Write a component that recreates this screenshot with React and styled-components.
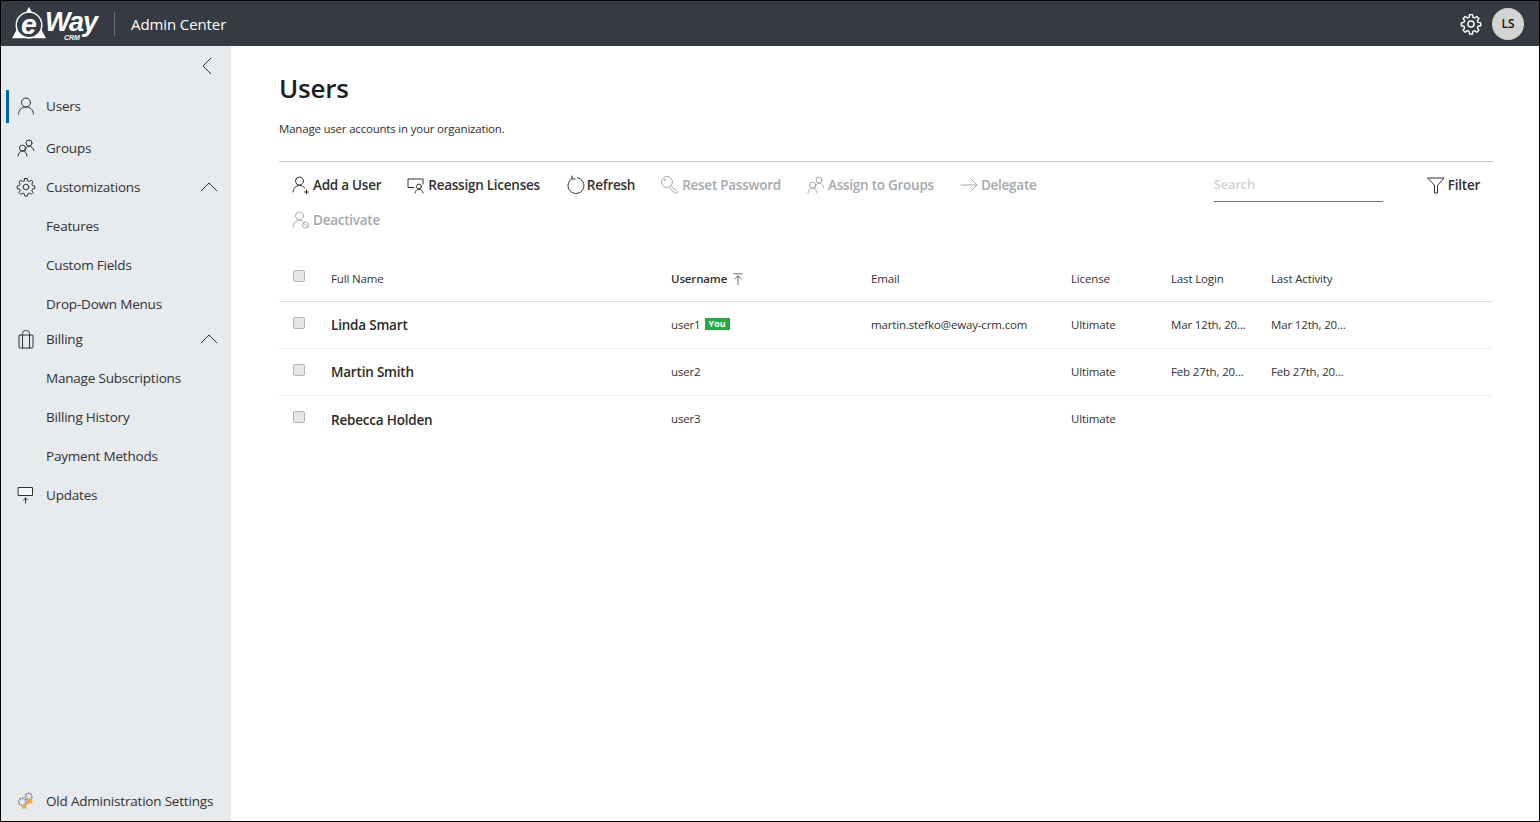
import React from 'react';
import styled, { createGlobalStyle } from 'styled-components';

const GlobalStyle = createGlobalStyle`
  html, body {
    margin: 0;
    padding: 0;
    height: 100%;
    background: #fff;
  }
  #root {
    height: 100%;
  }
  * {
    box-sizing: border-box;
  }
`;

const Page = styled.div`
  width: 1540px;
  height: 822px;
  border: 1px solid #000;
  display: flex;
  flex-direction: column;
  overflow: hidden;
  font-family: "Open Sans", "Noto Sans", sans-serif;
  color: #201f1e;
`;

const TopBar = styled.header`
  height: 45px;
  flex: none;
  display: flex;
  align-items: center;
  padding: 0 15px 0 10px;
  background: #363a42;
  color: #fff;
`;

const Logo = styled.div`
  width: 86px;
  height: 40px;
  display: flex;
  align-items: center;
  position: relative;
`;

const LogoWay = styled.span`
  margin-left: -3px;
  margin-top: -2px;
  font-family: "Liberation Sans", sans-serif;
  font-size: 27px;
  font-style: italic;
  font-weight: 700;
  letter-spacing: -1px;
`;

const LogoCrm = styled.span`
  position: absolute;
  left: 53px;
  top: 30px;
  font-family: "Liberation Sans", sans-serif;
  font-size: 7px;
  font-style: italic;
  font-weight: 700;
`;

const TopDivider = styled.div`
  width: 1px;
  height: 24px;
  margin: 0 16px 0 17px;
  background: #6f737a;
`;

const AppName = styled.div`
  flex: 1;
  font-size: 15px;
  letter-spacing: -0.1px;
`;

const Avatar = styled.div`
  width: 32px;
  height: 32px;
  margin-left: 10px;
  display: flex;
  align-items: center;
  justify-content: center;
  border-radius: 50%;
  background: #d3d3d3;
  color: #111;
  font-size: 12px;
  font-weight: 600;
`;

const Body = styled.div`
  flex: 1;
  min-height: 0;
  display: flex;
`;

const Sidebar = styled.nav`
  width: 230px;
  flex: none;
  display: flex;
  flex-direction: column;
  background: #e7ebee;
  color: #323130;
`;

const CollapseRow = styled.div`
  height: 38px;
  flex: none;
  display: flex;
  align-items: center;
  justify-content: flex-end;
  padding: 2px 14px 0 0;
`;

const NavItem = styled.div`
  position: relative;
  height: ${props => props.$height || 39}px;
  flex: none;
  display: flex;
  align-items: center;
  padding-bottom: ${props => props.$tight ? 4 : 0}px;
  padding-left: ${props => props.$sub ? 45 : 15}px;
  padding-right: 13px;
  font-size: 13.5px;
  letter-spacing: -0.2px;
`;

const ActiveBar = styled.span`
  position: absolute;
  left: 5px;
  top: 6px;
  width: 3px;
  height: 33px;
  background: #0063b1;
`;

const NavIcon = styled.span`
  width: 20px;
  height: 20px;
  margin-right: 10px;
  display: flex;
  align-items: center;
  justify-content: center;
  flex: none;
`;

const NavLabel = styled.span`
  flex: 1;
  white-space: nowrap;
`;

const SidebarFoot = styled.div`
  margin-top: auto;
  padding-bottom: 1px;
`;

const Main = styled.main`
  flex: 1;
  min-width: 0;
  padding: 0 46px 0 48px;
`;

const Title = styled.h1`
  margin: 24px 0 0;
  height: 38px;
  font-size: 26px;
  line-height: 36px;
  font-weight: 600;
  letter-spacing: -0.2px;
  color: #201f1e;
`;

const Subtitle = styled.p`
  margin: 11px 0 0;
  height: 20px;
  font-size: 11.5px;
  line-height: 20px;
  letter-spacing: -0.2px;
  color: #323130;
`;

const Toolbar = styled.div`
  margin-top: 22px;
  padding: 5px 13px 0 12px;
  height: 95px;
  display: flex;
  justify-content: space-between;
  align-items: flex-start;
  border-top: 1px solid #c8c8c8;
`;

const Actions = styled.div`
  width: 790px;
  display: flex;
  flex-wrap: wrap;
  column-gap: 25px;
`;

const ActionButton = styled.div`
  height: 35px;
  display: flex;
  align-items: center;
  gap: 2px;
  font-size: 13.5px;
  font-weight: 600;
  letter-spacing: -0.25px;
  white-space: nowrap;
  color: ${props => props.$disabled ? '#a6a9ac' : '#323130'};
`;

const ToolbarRight = styled.div`
  display: flex;
  align-items: flex-start;
`;

const SearchBox = styled.div`
  width: 169px;
  height: 35px;
  margin-right: 43px;
  display: flex;
  align-items: center;
  border-bottom: 1px solid #6b7280;
  font-size: 13px;
  font-weight: 600;
  letter-spacing: -0.2px;
  color: #ced2d6;
`;

const Row = styled.div`
  height: ${props => props.$header ? 46 : 47}px;
  display: grid;
  grid-template-columns: 52px 340px 200px 200px 100px 100px 1fr;
  align-items: center;
  border-bottom: 1px solid ${props => props.$header ? '#dedede' : '#efefef'};
  font-size: 11.5px;
  letter-spacing: -0.15px;
  color: #323130;

  &:last-child {
    border-bottom: none;
  }
`;

const CheckCell = styled.div`
  padding-left: 14px;
  margin-top: -5px;
`;

const Check = styled.span`
  display: block;
  width: 12px;
  height: 12px;
  border: 1px solid #b4b4b4;
  border-radius: 2px;
  background: #e6e6e6;
`;

const HeadCell = styled.div`
  display: flex;
  align-items: center;
  gap: 4px;
  font-weight: ${props => props.$sorted ? 600 : 400};
  white-space: nowrap;
`;

const NameCell = styled.div`
  font-size: 13.5px;
  font-weight: 600;
  letter-spacing: -0.2px;
  color: #2b2a29;
`;

const Cell = styled.div`
  display: flex;
  align-items: center;
  gap: 4px;
  margin-top: -2px;
  white-space: nowrap;
`;

const YouBadge = styled.span`
  display: inline-block;
  padding: 0 4px;
  height: 12px;
  line-height: 12px;
  background: #28a745;
  color: #fff;
  font-size: 9px;
  font-weight: 700;
  letter-spacing: 0;
`;

const Line = ({ size = 20, children, color = 'currentColor', width = 1 }) => (
  <svg width={size} height={size} viewBox="0 0 20 20" fill="none" stroke={color} strokeWidth={width} strokeLinecap="round" strokeLinejoin="round">
    {children}
  </svg>
);

const GearPath = () => (
  <>
    <circle cx="10" cy="10" r="2.8" />
    <path d="M8.7 1.5h2.6l.5 2.4 1.5.6 2-1.3 1.8 1.8-1.3 2 .6 1.5 2.4.5v2.6l-2.4.5-.6 1.5 1.3 2-1.8 1.8-2-1.3-1.5.6-.5 2.4H8.7l-.5-2.4-1.5-.6-2 1.3-1.8-1.8 1.3-2-.6-1.5-2.4-.5V9l2.4-.5.6-1.5-1.3-2 1.8-1.8 2 1.3 1.5-.6z" />
  </>
);

const UserIcon = () => (
  <Line>
    <circle cx="10" cy="6.5" r="4.5" />
    <path d="M2.5 18c.4-4.4 3.3-7 7.5-7s7.100 2.600 7.500 7" />
  </Line>
);

const GroupsIcon = () => (
  <Line>
    <circle cx="13" cy="5" r="3" />
    <path d="M9 13c.3-2.700 2-4.800 4-4.800 2.400 0 4.300 1.700 4.800 4.300" />
    <circle cx="6.500" cy="10" r="3" />
    <path d="M2 18c.3-3 2.100-5 4.500-5s4.200 2 4.500 5" />
  </Line>
);

const BillingIcon = () => (
  <Line>
    <rect x="3" y="6" width="14" height="13" rx="1" />
    <path d="M6.500 6V4.500a3 3 0 0 1 3-3h1a3 3 0 0 1 3 3V6M6.500 6v13M13.500 6v13" />
  </Line>
);

const UpdatesIcon = () => (
  <Line>
    <rect x="2.500" y="2.500" width="14" height="8" fill="#f4f6f8" />
    <path d="M9.500 18v-5M7.500 15l2-2 2 2" />
  </Line>
);

const OldAdminIcon = () => (
  <svg width="22" height="22" viewBox="0 0 22 22" fill="none">
    <circle cx="14" cy="6" r="3.500" stroke="#8c8c8c" strokeWidth="2" strokeDasharray="2 1" />
    <circle cx="7" cy="12" r="4" stroke="#8c8c8c" strokeWidth="2" strokeDasharray="2 1" />
    <circle cx="15" cy="11" r="3" fill="#f7a244" />
    <path d="M13 13l-5.500 5.500M9 17l1.500 1.500" stroke="#f7a244" strokeWidth="2.200" strokeLinecap="round" />
  </svg>
);

const ActionIcons = {
  add: (
    <Line>
      <circle cx="8.500" cy="6" r="4" />
      <path d="M2 17c.4-4 3-6.500 6.500-6.500 2.200 0 4 .9 5.200 2.500M15.500 15v4M13.500 17h4" />
    </Line>
  ),
  reassign: (
    <Line>
      <path d="M8 12.500H2V4h15v5" />
      <circle cx="13" cy="11.500" r="2.500" />
      <path d="M9 18c.3-2.200 1.900-3.600 4-3.600s3.700 1.400 4 3.600" />
    </Line>
  ),
  refresh: (
    <Line>
      <path d="M7 3.500A8 8 0 1 0 12.500 2.600" />
      <path d="M7 1v3h3" />
    </Line>
  ),
  key: (
    <Line>
      <circle cx="7" cy="7" r="5.500" />
      <path d="M11 11l6.500 6-1.500 1.500-1.500-.5-1-1.500-1-.5-2.500-3" />
      <circle cx="5" cy="5" r=".6" />
    </Line>
  ),
  arrow: (
    <Line>
      <path d="M2 10h16M12 4l6 6-6 6" />
    </Line>
  ),
  deactivate: (
    <Line>
      <circle cx="8.500" cy="6" r="4" />
      <path d="M2 17c.4-4 3-6.500 6.500-6.500 1 0 2 .2 2.800.6" />
      <circle cx="14.500" cy="15" r="3" />
      <path d="M12.500 13l4 4" />
    </Line>
  ),
  filter: (
    <Line>
      <path d="M2 3h16l-6.500 7.500V18h-3v-7.500z" />
    </Line>
  ),
};

const actions = [
  { key: 'add', label: 'Add a User', icon: ActionIcons.add },
  { key: 'reassign', label: 'Reassign Licenses', icon: ActionIcons.reassign },
  { key: 'refresh', label: 'Refresh', icon: ActionIcons.refresh },
  { key: 'reset', label: 'Reset Password', icon: ActionIcons.key, disabled: true },
  { key: 'assign', label: 'Assign to Groups', icon: <GroupsIcon />, disabled: true },
  { key: 'delegate', label: 'Delegate', icon: ActionIcons.arrow, disabled: true },
  { key: 'deactivate', label: 'Deactivate', icon: ActionIcons.deactivate, disabled: true },
];

const users = [
  { name: 'Linda Smart', username: 'user1', you: true, email: 'martin.stefko@eway-crm.com', license: 'Ultimate', login: 'Mar 12th, 20...', activity: 'Mar 12th, 20...' },
  { name: 'Martin Smith', username: 'user2', email: '', license: 'Ultimate', login: 'Feb 27th, 20...', activity: 'Feb 27th, 20...' },
  { name: 'Rebecca Holden', username: 'user3', email: '', license: 'Ultimate', login: '', activity: '' },
];

const Chevron = ({ up }) => (
  <svg width="18" height="18" viewBox="0 0 18 18" fill="none" stroke="#323130" strokeWidth="1">
    {up ? <path d="M1 13l8-8 8 8" /> : <path d="M12 1L4 9l8 8" />}
  </svg>
);

export default function App() {
  return (
    <Page>
      <GlobalStyle />
      <TopBar>
        <Logo>
          <svg width="39" height="40" viewBox="0 0 39 40" fill="none">
            <path d="M19 2L37 35H1z" fill="#fff" />
            <circle cx="19" cy="21" r="13.500" fill="#363a42" stroke="#fff" strokeWidth="1.500" />
            <text x="19" y="31" textAnchor="middle" fontFamily="Liberation Sans" fontSize="30" fontStyle="italic" fontWeight="700" fill="#fff">e</text>
          </svg>
          <LogoWay>Way</LogoWay>
          <LogoCrm>CRM</LogoCrm>
        </Logo>
        <TopDivider />
        <AppName>Admin Center</AppName>
        <Line size={22} width={1.300}><GearPath /></Line>
        <Avatar>LS</Avatar>
      </TopBar>
      <Body>
        <Sidebar>
          <CollapseRow><Chevron /></CollapseRow>
          <NavItem $height={44}>
            <ActiveBar />
            <NavIcon><UserIcon /></NavIcon>
            <NavLabel>Users</NavLabel>
          </NavItem>
          <NavItem>
            <NavIcon><GroupsIcon /></NavIcon>
            <NavLabel>Groups</NavLabel>
          </NavItem>
          <NavItem>
            <NavIcon><Line><GearPath /></Line></NavIcon>
            <NavLabel>Customizations</NavLabel>
            <Chevron up />
          </NavItem>
          <NavItem $sub>Features</NavItem>
          <NavItem $sub>Custom Fields</NavItem>
          <NavItem $sub>Drop-Down Menus</NavItem>
          <NavItem $height={35} $tight>
            <NavIcon><BillingIcon /></NavIcon>
            <NavLabel>Billing</NavLabel>
            <Chevron up />
          </NavItem>
          <NavItem $sub>Manage Subscriptions</NavItem>
          <NavItem $sub>Billing History</NavItem>
          <NavItem $sub>Payment Methods</NavItem>
          <NavItem>
            <NavIcon><UpdatesIcon /></NavIcon>
            <NavLabel>Updates</NavLabel>
          </NavItem>
          <SidebarFoot>
            <NavItem>
              <NavIcon><OldAdminIcon /></NavIcon>
              <NavLabel>Old Administration Settings</NavLabel>
            </NavItem>
          </SidebarFoot>
        </Sidebar>
        <Main>
          <Title>Users</Title>
          <Subtitle>Manage user accounts in your organization.</Subtitle>
          <Toolbar>
            <Actions>
              {actions.map(a => (
                <ActionButton key={a.key} $disabled={a.disabled}>
                  {a.icon}
                  {a.label}
                </ActionButton>
              ))}
            </Actions>
            <ToolbarRight>
              <SearchBox>Search</SearchBox>
              <ActionButton>
                {ActionIcons.filter}
                Filter
              </ActionButton>
            </ToolbarRight>
          </Toolbar>
          <Row $header>
            <CheckCell><Check /></CheckCell>
            <HeadCell>Full Name</HeadCell>
            <HeadCell $sorted>
              Username
              <Line size={14}><path d="M4 2.500h12M10 18V5.500M5.500 10L10 5.500l4.500 4.500" /></Line>
            </HeadCell>
            <HeadCell>Email</HeadCell>
            <HeadCell>License</HeadCell>
            <HeadCell>Last Login</HeadCell>
            <HeadCell>Last Activity</HeadCell>
          </Row>
          {users.map(u => (
            <Row key={u.username}>
              <CheckCell><Check /></CheckCell>
              <NameCell>{u.name}</NameCell>
              <Cell>
                {u.username}
                {u.you && <YouBadge>You</YouBadge>}
              </Cell>
              <Cell>{u.email}</Cell>
              <Cell>{u.license}</Cell>
              <Cell>{u.login}</Cell>
              <Cell>{u.activity}</Cell>
            </Row>
          ))}
        </Main>
      </Body>
    </Page>
  );
}
